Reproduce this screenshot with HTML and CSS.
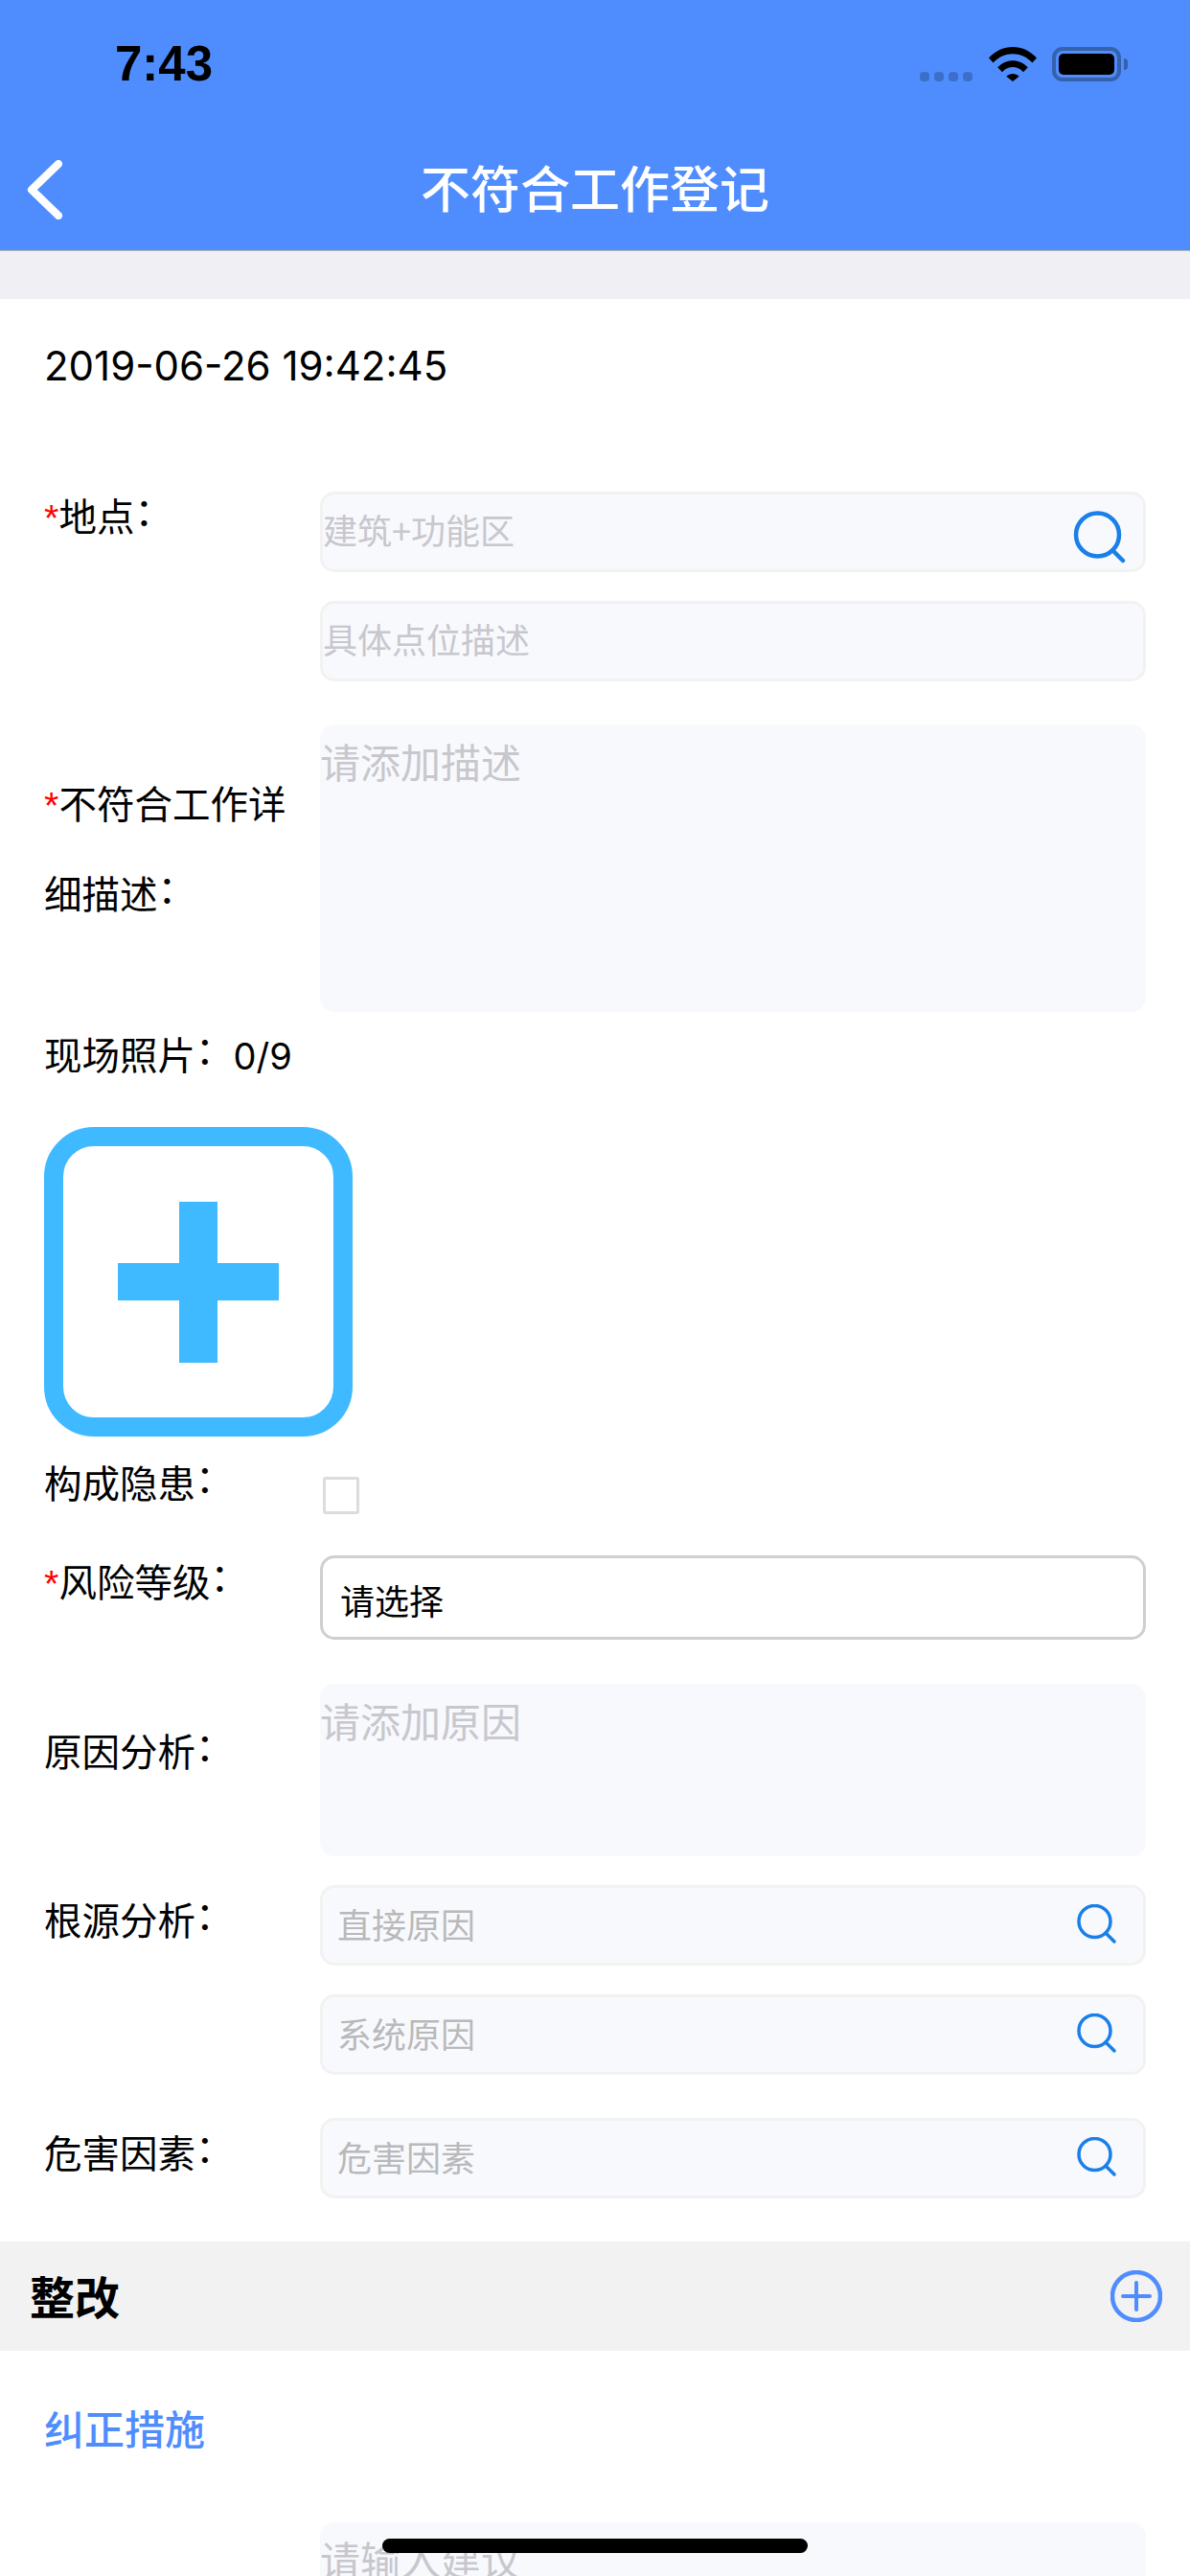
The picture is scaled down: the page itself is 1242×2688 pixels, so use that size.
FILE: index.html
```html
<!DOCTYPE html>
<html lang="zh">
<head>
    <meta charset="UTF-8">
    <meta name="viewport" content="width=device-width, initial-scale=1.0">
    <title>不符合工作登记</title>
    <link rel="stylesheet" href="styles.css">
</head>
<body>
    <div class="page">
        <header class="nav">
            <div class="status">
                <span class="time">7:43</span>
                <div class="status-icons">
                    <div class="signal"><i></i><i></i><i></i><i></i></div>
                    <svg class="wifi" width="50" height="36" viewBox="0 0 50 36">
                        <path d="M0 11.5C14 -3.8 36 -3.8 50 11.5L45.4 16.4C34 4.2 16 4.2 4.6 16.4Z"/>
                        <path d="M9.2 21.2C18 11.8 32 11.8 40.8 21.2L36 26.2C29.5 19.4 20.5 19.4 14 26.2Z"/>
                        <path d="M18.4 30.8C22 27 28 27 31.6 30.8L25 36Z"/>
                    </svg>
                    <div class="battery"><div class="battery-fill"></div></div>
                    <div class="battery-nub"></div>
                </div>
            </div>
            <div class="titlebar">
                <svg class="back" width="37" height="62" viewBox="0 0 37 62">
                    <path d="M33 4L5 31L33 58" fill="none" stroke="#fff" stroke-width="8" stroke-linecap="round" stroke-linejoin="round"/>
                </svg>
                <h1 class="title">不符合工作登记</h1>
            </div>
        </header>

        <main class="sheet">
            <div class="date">2019-06-26 19:42:45</div>

            <div class="row row-location">
                <div class="label"><span class="star">*</span>地点<span class="colon">：</span></div>
                <div class="fields">
                    <div class="field">
                        <span class="hint">建筑+功能区</span>
                        <svg class="search-big" width="56" height="56" viewBox="0 0 56 56">
                            <circle cx="26.500" cy="25" r="22.500" fill="none" stroke="#1a7fe8" stroke-width="4.500"/>
                            <path d="M43 42L53 52" fill="none" stroke="#1a7fe8" stroke-width="4.500" stroke-linecap="round"/>
                        </svg>
                    </div>
                    <div class="field"><span class="hint">具体点位描述</span></div>
                </div>
            </div>

            <div class="row row-desc">
                <div class="label label-tall"><span class="star">*</span>不符合工作详细描述<span class="colon">：</span></div>
                <div class="area area-desc">请添加描述</div>
            </div>

            <div class="photo-label">现场照片<span class="colon">：</span><span class="count">0/9</span></div>
            <div class="add-photo">
                <div class="plus-v"></div>
                <div class="plus-h"></div>
            </div>

            <div class="row row-check">
                <div class="label">构成隐患<span class="colon">：</span></div>
                <div class="checkbox"></div>
            </div>

            <div class="row row-risk">
                <div class="label"><span class="star">*</span>风险等级<span class="colon">：</span></div>
                <div class="select">请选择</div>
            </div>

            <div class="row row-cause">
                <div class="label">原因分析<span class="colon">：</span></div>
                <div class="area area-cause">请添加原因</div>
            </div>

            <div class="row row-root">
                <div class="label">根源分析<span class="colon">：</span></div>
                <div class="fields">
                    <div class="field field-search">
                        <span class="hint-dark">直接原因</span>
                        <svg class="search" width="42" height="42" viewBox="0 0 42 42"><circle cx="18.500" cy="18" r="16.500" fill="none" stroke="#1a7fe8" stroke-width="3.500"/><path d="M30 30L39 39" fill="none" stroke="#1a7fe8" stroke-width="3.500" stroke-linecap="round"/></svg>
                    </div>
                    <div class="field field-search">
                        <span class="hint-dark">系统原因</span>
                        <svg class="search" width="42" height="42" viewBox="0 0 42 42"><circle cx="18.500" cy="18" r="16.500" fill="none" stroke="#1a7fe8" stroke-width="3.500"/><path d="M30 30L39 39" fill="none" stroke="#1a7fe8" stroke-width="3.500" stroke-linecap="round"/></svg>
                    </div>
                </div>
            </div>

            <div class="row row-hazard">
                <div class="label">危害因素<span class="colon">：</span></div>
                <div class="fields">
                    <div class="field field-search">
                        <span class="hint-dark">危害因素</span>
                        <svg class="search" width="42" height="42" viewBox="0 0 42 42"><circle cx="18.500" cy="18" r="16.500" fill="none" stroke="#1a7fe8" stroke-width="3.500"/><path d="M30 30L39 39" fill="none" stroke="#1a7fe8" stroke-width="3.500" stroke-linecap="round"/></svg>
                    </div>
                </div>
            </div>

            <div class="section-bar">
                <h2 class="section-title">整改</h2>
                <svg width="54" height="54" viewBox="0 0 54 54">
                    <circle cx="27" cy="27" r="25" fill="none" stroke="#4f8dff" stroke-width="4.500"/>
                    <path d="M27 13V41M13 27H41" fill="none" stroke="#4f8dff" stroke-width="4" stroke-linecap="round"/>
                </svg>
            </div>

            <div class="measure-title">纠正措施</div>
            <div class="row row-measure">
                <div class="area area-measure">请输入建议</div>
            </div>
        </main>

        <div class="home-bar"></div>
    </div>
</body>
</html>
```

FILE: styles.css
```css
/* Custom styles */
html, body {
    margin: 0;
    padding: 0;
    background-color: #fff;
}
.page {
    position: relative;
    width: 1242px;
    height: 2688px;
    overflow: hidden;
    background-color: #f0eff4;
    font-family: "Noto Sans CJK SC", "Liberation Sans", sans-serif;
    font-size: 39.5px;
    color: #000;
}

/* header */
.nav {
    height: 261px;
    border-bottom: 1px solid #b2b2b2;
    background-color: #4f8dff;
}
.status {
    display: flex;
    justify-content: space-between;
    height: 132px;
    padding: 0 65px 0 120px;
}
.time {
    margin-top: 38px;
    font-family: "Liberation Sans", sans-serif;
    font-size: 51px;
    line-height: 58px;
    font-weight: 700;
}
.status-icons {
    display: flex;
    align-items: flex-start;
    padding-top: 49px;
}
.signal {
    display: flex;
    gap: 5px;
    margin-top: 26px;
    margin-right: 17px;
}
.signal i {
    display: block;
    width: 10px;
    height: 10px;
    border-radius: 4px;
    background-color: #3c6fc9;
}
.wifi {
    margin-right: 16px;
}
.battery {
    box-sizing: border-box;
    width: 72px;
    height: 36px;
    padding: 3px;
    border: 4px solid #3561ad;
    border-radius: 11px;
}
.battery-fill {
    height: 100%;
    border-radius: 5px;
    background-color: #000;
}
.battery-nub {
    width: 4px;
    height: 12px;
    margin-top: 12px;
    margin-left: 3px;
    border-radius: 0 6px 6px 0;
    background-color: #3561ad;
}
.titlebar {
    position: relative;
    display: flex;
    justify-content: center;
    align-items: center;
    height: 129px;
}
.back {
    position: absolute;
    left: 28px;
    top: 35px;
}
.title {
    margin: 0 0 4px;
    font-size: 52px;
    font-weight: 500;
    line-height: 60px;
    color: #fff;
}

/* form */
.sheet {
    margin-top: 50px;
    height: 2376px;
    background-color: #fff;
}
.date {
    padding: 49px 46px 0;
    height: 153px;
    box-sizing: border-box;
    font-family: Inter, "Liberation Sans", sans-serif;
    font-size: 42px;
    line-height: 42px;
}
.row {
    display: flex;
    padding: 0 46px;
}
.label {
    flex: none;
    box-sizing: border-box;
    width: 288px;
    line-height: 48px;
}
.star {
    font-family: "Liberation Sans", sans-serif;
    line-height: 1;
    color: #f00;
}
.colon {
    display: inline-block;
    transform: translateY(-6px);
}
.fields {
    display: flex;
    flex-direction: column;
    flex: 1;
    gap: 30px;
}
.field {
    display: flex;
    justify-content: space-between;
    align-items: center;
    box-sizing: border-box;
    height: 84px;
    padding: 0 18px 6px 0;
    border: 3px solid #f2f2f2;
    border-radius: 15px;
    background-color: #f8f9fd;
}
.hint {
    font-size: 36px;
    color: #c7c7cd;
}
.search-big {
    margin-top: 12px;
    margin-bottom: -6px;
}
.field-search {
    padding: 0 27px 4px 15px;
}
.search {
    margin-bottom: -2px;
}
.hint-dark {
    font-size: 36px;
    color: #b9b9bb;
}
.area {
    flex: 1;
    box-sizing: border-box;
    padding: 11px 0 0;
    border-radius: 15px;
    background-color: #f8f9fd;
    font-size: 42px;
    line-height: 54px;
    color: #c7c7cd;
}
.row-location {
    margin-top: 48px;
}
.row-desc {
    margin-top: 45px;
}
.label-tall {
    padding-top: 34px;
    width: 270px;
    margin-right: 18px;
    line-height: 94px;
}
.area-desc {
    height: 300px;
}
.photo-label {
    height: 54px;
    margin-top: 19px;
    padding-left: 46px;
    line-height: 48px;
}
.count {
    font-family: Inter, "Liberation Sans", sans-serif;
    font-size: 38px;
    line-height: 1;
}
.add-photo {
    position: relative;
    box-sizing: border-box;
    width: 322px;
    height: 323px;
    margin: 47px 0 0 46px;
    border: 20px solid #3fb9ff;
    border-radius: 52px;
}
.plus-v {
    position: absolute;
    left: 121px;
    top: 58px;
    width: 40px;
    height: 168px;
    background-color: #3fb9ff;
}
.plus-h {
    position: absolute;
    left: 57px;
    top: 122px;
    width: 168px;
    height: 39px;
    background-color: #3fb9ff;
}
.row-check {
    margin-top: 23px;
}
.checkbox {
    box-sizing: border-box;
    width: 38px;
    height: 39px;
    margin: 19px 0 0 3px;
    border: 3px solid #dcdcdc;
    border-radius: 3px;
}
.row-risk {
    margin-top: 43px;
}
.row-risk .label {
    padding-top: 2px;
}
.select {
    flex: 1;
    box-sizing: border-box;
    height: 88px;
    padding: 18px 0 0 18px;
    border: 3px solid #cfcfcf;
    border-radius: 15px;
    font-size: 36px;
    line-height: 50px;
}
.row-cause {
    margin-top: 46px;
}
.row-cause .label {
    padding-top: 45px;
}
.area-cause {
    height: 180px;
}
.row-root {
    margin-top: 30px;
}
.row-root .label, .row-hazard .label {
    padding-top: 11px;
}
.row-hazard {
    margin-top: 45px;
}

/* rectify section */
.section-bar {
    display: flex;
    justify-content: space-between;
    align-items: center;
    height: 114px;
    margin-top: 45px;
    padding: 0 29px 0 31px;
    background-color: #f2f2f2;
}
.section-title {
    margin: 0 0 4px;
    font-size: 47px;
    font-weight: 700;
}
.measure-title {
    margin-top: 61px;
    padding-left: 46px;
    font-size: 42px;
    font-weight: 500;
    line-height: 38px;
    color: #4f8dff;
}
.row-measure {
    margin-top: 80px;
    padding-left: 334px;
}
.area-measure {
    height: 200px;
}

.home-bar {
    position: absolute;
    left: 399px;
    top: 2649px;
    width: 444px;
    height: 15px;
    border-radius: 8px;
    background-color: #000;
}
```
